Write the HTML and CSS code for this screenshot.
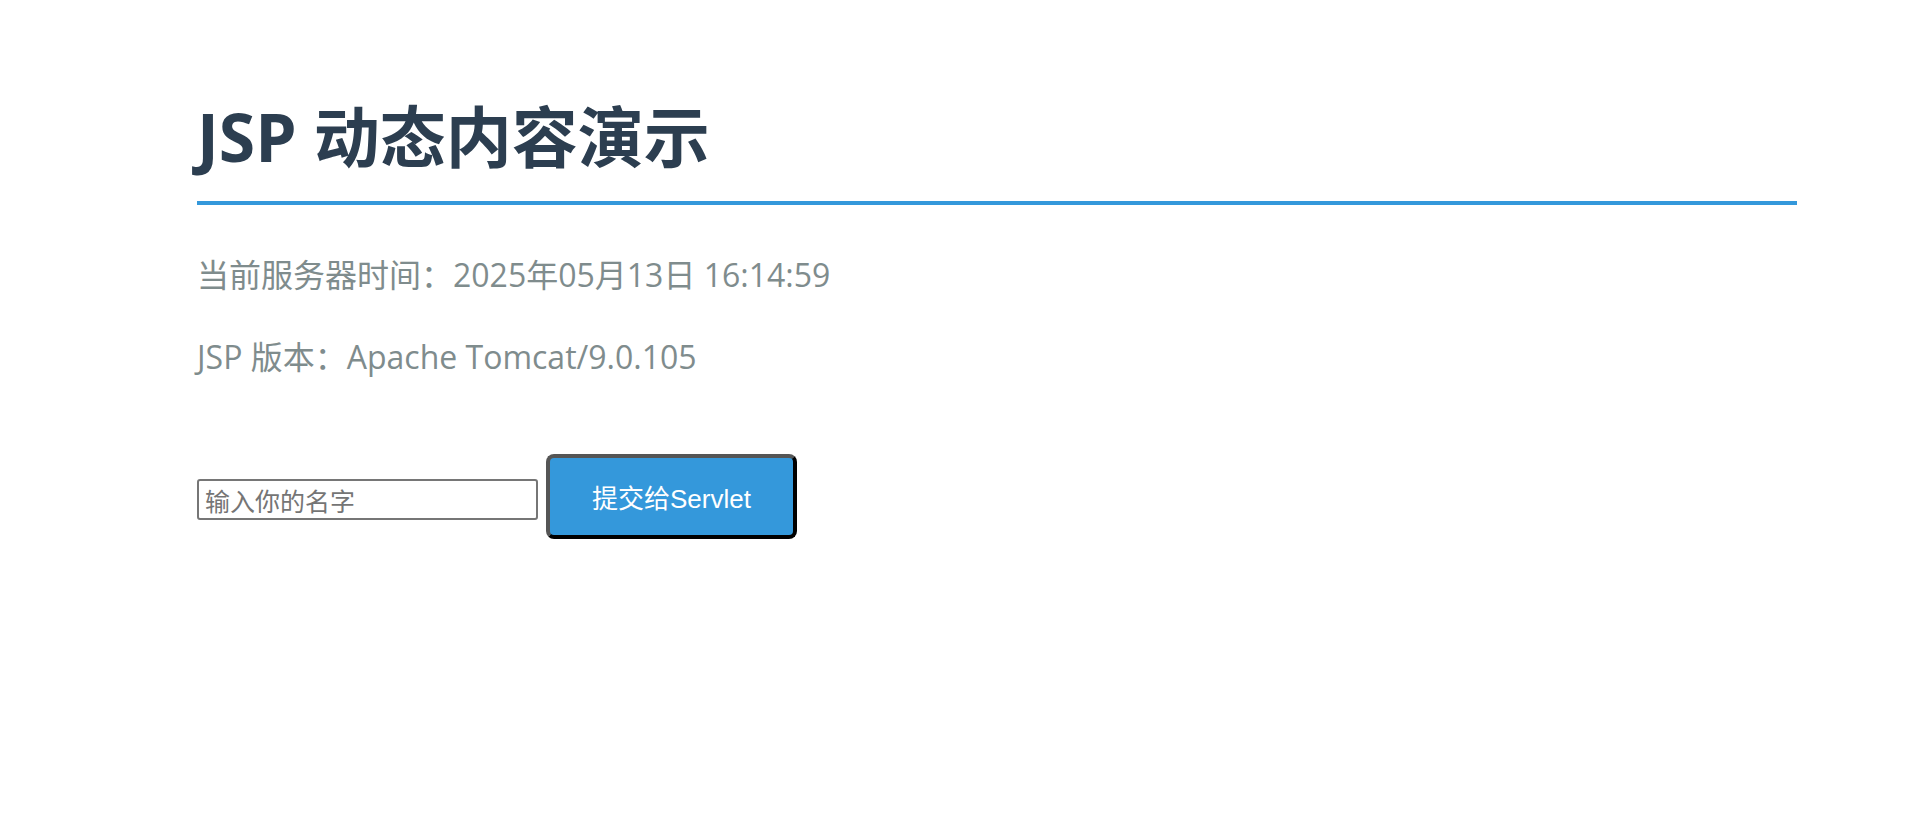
FILE: index.html
```html
<!DOCTYPE html>
<html lang="zh-CN">
<head>
    <meta charset="UTF-8">
    <meta name="viewport" content="width=device-width, initial-scale=1.0">
    <title>JSP 动态内容演示</title>
    <link rel="stylesheet" href="styles.css">
</head>
<body>
    <div class="page">
        <h1>JSP 动态内容演示</h1>
        <p class="info">当前服务器时间：2025年05月13日 16:14:59</p>
        <p class="info">JSP 版本：Apache Tomcat/9.0.105</p>

        <form class="name-form" action="hello" method="post">
            <input type="text" name="username" placeholder="输入你的名字">
            <button type="submit">提交给Servlet</button>
        </form>
    </div>
</body>
</html>
```

FILE: styles.css
```css
body {
    margin: 0;
    background-color: #fff;
    font-family: "Open Sans", "Noto Sans CJK SC", sans-serif;
}
.page {
    width: 1600px;
    margin-left: 197px;
}
h1 {
    margin: 96px 0 0;
    padding-bottom: 25px;
    font-size: 66px;
    line-height: 80px;
    font-weight: 700;
    color: #2c3e50;
    border-bottom: 4px solid #3498db;
}
.info {
    margin: 0 0 34px;
    font-size: 32px;
    line-height: 48px;
    color: #7f8c8d;
}
h1 + .info {
    margin-top: 46px;
}
.name-form {
    display: flex;
    align-items: center;
    gap: 8px;
    margin-top: 73px;
}
.name-form input[type="text"] {
    box-sizing: border-box;
    width: 341px;
    height: 41px;
    margin-top: 6px;
    padding: 0 6px;
    border: 2px solid #767676;
    border-radius: 3px;
    font-family: "Noto Sans CJK SC", sans-serif;
    font-size: 25px;
    color: #333;
}
.name-form input::placeholder {
    color: #757575;
}
.name-form button {
    box-sizing: border-box;
    height: 85px;
    padding: 0 42px;
    background-color: #3498db;
    color: #fff;
    border: 4px solid;
    border-color: #555 #000 #000 #555;
    border-radius: 8px;
    font-family: "Liberation Sans", "Noto Sans CJK SC", sans-serif;
    font-size: 26px;
    cursor: pointer;
}
```
